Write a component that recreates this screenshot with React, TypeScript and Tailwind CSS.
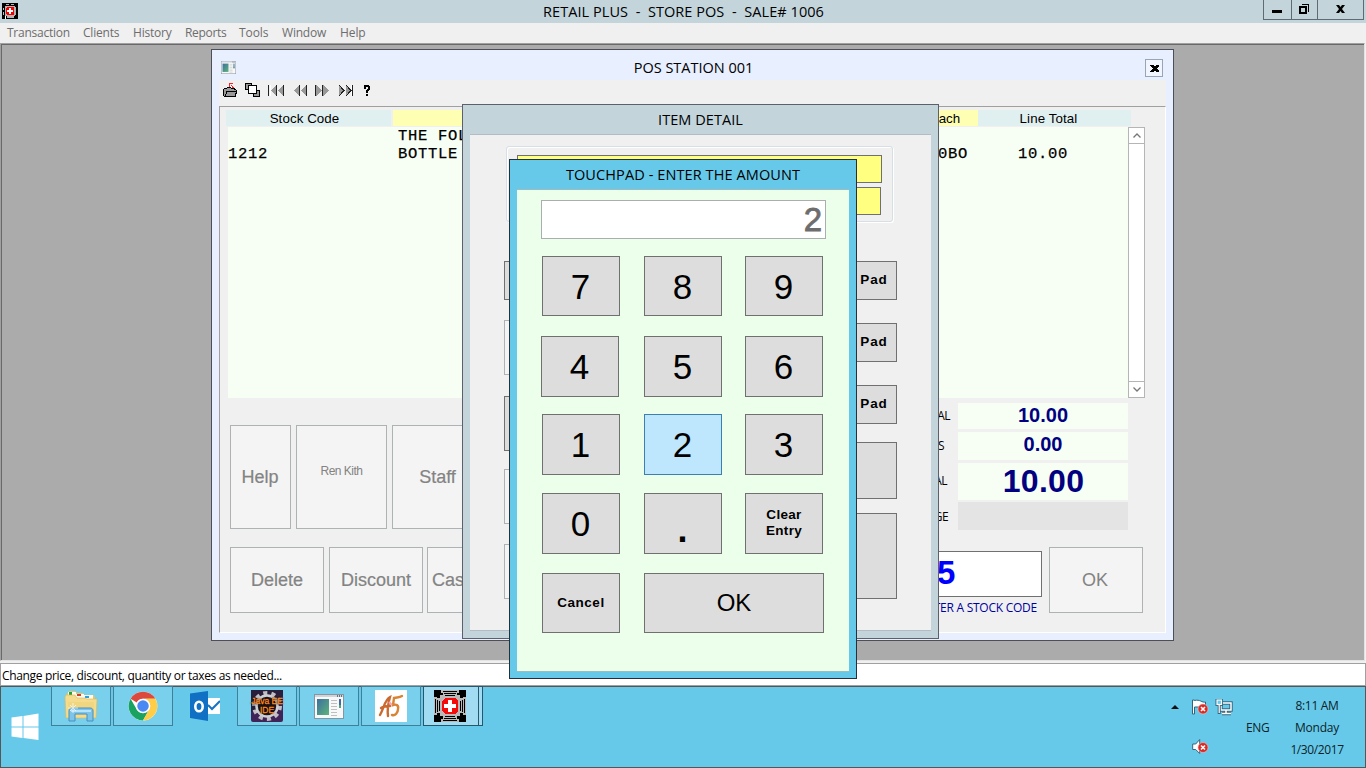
import React from "react";

const segoe = "font-['Open_Sans','Noto_Sans',sans-serif]";
const sans = "font-['Liberation_Sans',Arial,sans-serif]";
const mono = "font-['Liberation_Mono','Courier_New',monospace]";

function MedicalIcon({ size }: { size: number }) {
  return (
    <svg width={size} height={size} viewBox="0 0 32 32" shapeRendering="crispEdges" className="shrink-0">
      <rect width="32" height="32" fill="#000" />
      <path d="M7 0h18v3h-2v2h3v3h3v-1h3v18h-3v-2h-3v3h-3v3h2v3H7v-3h2v-3H6v-3H3v2H0V7h3v1h3V5h3V3H7z" fill="#b9b9b9" />
      <path d="M1.500 9v14M3.500 10v12M5.500 11v10M26.500 11v10M28.500 10v12M30.500 9v14M9 1.500h14M10 3.500h12M11 5.500h10M11 26.500h10M10 28.500h12M9 30.500h14" stroke="#000" strokeWidth="1" />
      <rect x="7" y="7" width="18" height="18" fill="#b9b9b9" />
      <path d="M11 8h10l3 3v10l-3 3H11l-3-3V11z" fill="#f50a0a" />
      <path d="M14 10h4v4h4v4h-4v4h-4v-4h-4v-4h4z" fill="#fff" />
    </svg>
  );
}

function MedicalIconSmall() {
  return (
    <svg width="16" height="16" viewBox="0 0 16 16" shapeRendering="crispEdges">
      <rect width="16" height="16" fill="#000" />
      <path d="M4 1h3v1H4zM9 1h3v1H9zM3 3h10v1h1v8h-1v1h-1v2H5v-2H3V4z" fill="#b4b4b4" />
      <path d="M1 5h1v2H1zM1 9h1v3H1z" fill="#c4c4c4" />
      <path d="M3 13h1v3H3z" fill="#fff" />
      <path d="M5 4h6l1 1v6l-1 1H5l-1-1V5z" fill="#f50000" />
      <path d="M7 5h2v2h2v2H9v2H7V9H5V7h2z" fill="#fff" />
    </svg>
  );
}

function FormIcon({ w, h }: { w: number; h: number }) {
  return (
    <svg width={w} height={h} viewBox="0 0 30 25" preserveAspectRatio="none" className="shrink-0">
      <defs>
        <linearGradient id="formPane" x1="0" y1="0" x2="1" y2="1">
          <stop offset="0" stopColor="#3d6f9e" />
          <stop offset="1" stopColor="#5cb47c" />
        </linearGradient>
      </defs>
      <rect x=".5" y=".5" width="29" height="24" fill="#f8f8f8" stroke="#8695a0" />
      <path d="M1 2h28" stroke="#d0d4da" strokeWidth="2" />
      <path d="M23 2h1M25 2h1M27 2h1" stroke="#456" strokeWidth="1.500" />
      <rect x="3" y="5" width="12" height="16" fill="url(#formPane)" />
      <path d="M17 6.500h6M17 9.500h6M17 12.500h6M17 15.500h6M17 18.500h6M17 21.500h6" stroke="#bcc0c2" />
      <rect x="25" y="5" width="2" height="9" fill="#3c6aa0" />
      <rect x="25" y="11" width="2" height="3" fill="#51a477" />
    </svg>
  );
}

function Toolbar() {
  return (
    <svg width="152" height="18" viewBox="0 0 152 18" shapeRendering="crispEdges">
      <path d="M1.500 8.500l1-1h2l1-1h3l1 1h3v1h1l1 1-1 6H2.500l-1-1z" fill="#999" stroke="#000" />
      <path d="M3 15l2-4.500h9" fill="none" stroke="#000" />
      <path d="M7.500 2v4M7 2.500h4M9.500 4v1M10.500 5v2M11.500 6v1" fill="none" stroke="#f22" />
      <g stroke="#000" fill="#999">
        <rect x="23.500" y="2.500" width="6" height="6" />
        <rect x="31.500" y="9.500" width="6" height="6" />
        <rect x="26.500" y="4.500" width="8" height="8" fill="#fff" />
      </g>
      <path d="M54 4v11l-5-5.500zM61 4v11l-5-5.500zM77 4v11l-5-5.500zM84 4v11l-5-5.500zM94 4v11l6-5.500zM101 4v11l6-5.500zM117 4v11l5-5.500zM124 4v11l5-5.500z" fill="#999" />
      <path d="M46.500 4v11M54.500 4v11M61.500 4v11M77.500 4v11M84.500 4v11M93.500 4v11M100.500 4v11M130.500 4v11" stroke="#222" />
      <path d="M48.500 4v11M129.500 4v11" stroke="#fff" />
      <path d="M117 4l5 5.500-5 5.500M124 4l5 5.500-5 5.500" fill="none" stroke="#222" />
      <path d="M142 4h5v1h1v4h-1v1h-1v2h-2V9h1V8h1V6h-2v2h-2V5h0zM144 13h2v2h-2z" fill="#000" />
    </svg>
  );
}

function Blurred({ children, className }: { children?: React.ReactNode; className: string }) {
  return (
    <div className={`shrink-0 border border-[#adb2b5] bg-[#f4f4f4] text-[#838383] flex items-center justify-center ${className}`}>
      {children}
    </div>
  );
}

function Key({ children, className }: { children?: React.ReactNode; className: string }) {
  return (
    <button className={`block shrink-0 border border-[#707070] bg-[#dddddd] text-black text-center ${className}`}>
      {children}
    </button>
  );
}

function Digit({ n, className = "" }: { n: string; className?: string }) {
  return (
    <Key className={`w-[78px] ${className}`}>
      <span className={`block pr-px pt-px text-[35px] leading-[40px] ${sans}`}>{n}</span>
    </Key>
  );
}

function TitleBar() {
  return (
    <header className="h-[23px] bg-[#c3d5db] flex items-start">
      <div className="pl-[2px] pt-[3px] w-[20px]"><MedicalIconSmall /></div>
      <div className={`flex-1 text-center pl-[4px] text-[14.500px] leading-[23px] whitespace-pre text-black ${segoe}`}>
        <span className="inline-block ml-[80px] tracking-[0.05px]">RETAIL PLUS  -  STORE POS  -  SALE# 1006</span>
      </div>
      <div className="flex w-[101px] h-[20px] mr-[2px] border border-t-0 border-[#5f6b73]">
        <div className="w-[27px] flex justify-center items-start pt-[10px] pr-[2px]"><div className="w-[10px] h-[3px] bg-black" /></div>
        <div className="w-[27px] border-x border-[#5f6b73] flex justify-center pt-[4px] pr-[2px]">
          <svg width="10" height="10" viewBox="0 0 10 10" shapeRendering="crispEdges">
            <path d="M2.500 0.500h7v7" fill="none" stroke="#000" />
            <rect x="1" y="3" width="6" height="6" fill="none" stroke="#000" strokeWidth="2" />
          </svg>
        </div>
        <div className="flex-1 flex justify-center pt-[5px]">
          <svg width="9" height="8" viewBox="0 0 9 8"><path d="M0 0h3l1.500 2L6 0h3L6 4l3 4H6L4.500 6 3 8H0l3-4z" /></svg>
        </div>
      </div>
    </header>
  );
}

function MenuBar() {
  return (
    <nav className={`h-[20px] bg-[#f0f0f0] flex pl-[7px] text-[12px] leading-[20px] text-[#6d6d6d] whitespace-nowrap ${segoe}`}>
      <span className="w-[76px] tracking-[-0.25px]">Transaction</span>
      <span className="w-[50px] tracking-[-0.2px]">Clients</span>
      <span className="w-[52px] tracking-[-0.2px]">History</span>
      <span className="w-[54px] tracking-[-0.3px]">Reports</span>
      <span className="w-[43px] tracking-[-0.1px]">Tools</span>
      <span className="w-[58px] tracking-[-0.2px]">Window</span>
      <span className="tracking-[-0.1px]">Help</span>
    </nav>
  );
}

function Chevron({ down }: { down?: boolean }) {
  return (
    <div className="h-[15px] w-[15px] flex items-center justify-center">
      <svg width="8" height="5" viewBox="0 0 8 5">
        <path d={down ? "M.5 .5L4 4l3.500-3.500" : "M.5 4.500L4 1l3.500 3.500"} fill="none" stroke="#777" strokeWidth="1.300" />
      </svg>
    </div>
  );
}

function PosWindow() {
  return (
    <section className="absolute left-[209px] top-[4px] w-[963px] h-[592px] border border-[#4c4f58] bg-[#e8efff] px-[7px] pb-[7px] flex flex-col">
      <div className="h-[30px] flex shrink-0">
        <div className="w-[40px] pt-[11px] pl-[2px]"><FormIcon w={15} h={13} /></div>
        <div className={`flex-1 text-center pr-[17px] pt-[7px] text-[14.500px] leading-[22px] text-black ${segoe}`}>
          <span className="tracking-[-0.02px]">POS STATION 001</span>
        </div>
        <div className="mt-[9px] mr-[3px] w-[18px] h-[18px] border border-[#98a5b5] bg-[#f1f5ff] flex items-center justify-center">
          <svg width="9" height="7" viewBox="0 0 9 7" shapeRendering="crispEdges"><path d="M0 0h3l1.500 1.500L6 0h3v1L6.500 3.500 9 6v1H6L4.500 5.500 3 7H0V6l2.500-2.500L0 1z" /></svg>
        </div>
      </div>
      <div className="h-[26px] bg-[#f0f0f0] shrink-0 pl-[3px] pt-px"><Toolbar /></div>
      <div className="flex-1 bg-[#f0f0f0] border-t border-l border-[#a0a0a0] border-r border-b border-r-white border-b-white">
        <div className={`ml-[6px] mt-[3px] h-[16px] flex text-[13.330px] leading-[17px] text-black ${sans}`}>
          <div className="w-[165px] bg-[#e0f0f0] text-center pr-[8px] tracking-[0.08px]">Stock Code</div>
          <div className="ml-[2px] w-[585px] bg-[#ffffb3] text-right pr-[18px] tracking-[-0.1px]">Each</div>
          <div className="w-[153px] bg-[#e0f0f0] text-center pr-[12px] tracking-[0.1px]">Line Total</div>
        </div>
        <div className="ml-[8px] mt-px h-[271px] flex">
          <div className={`w-[900px] bg-[#f7fff5] text-[15.500px] tracking-[0.7px] leading-[18px] text-black whitespace-pre [-webkit-text-stroke:0.25px_#000] ${mono}`}>
            <div className="pl-[170px]">THE FOLLOWING</div>
            <div className="flex">
              <span className="w-[170px]">1212</span>
              <span className="w-[540px]">BOTTLE</span>
              <span className="w-[80px]">0BO</span>
              <span>10.00</span>
            </div>
          </div>
          <div className="w-[17px] border border-[#b5b5b5] bg-white flex flex-col justify-between">
            <div className="border-b border-[#b5b5b5]"><Chevron /></div>
            <div className="border-t border-[#b5b5b5]"><Chevron down /></div>
          </div>
        </div>
        <div className="flex ml-[10px]">
          <div className={`w-[670px] [-webkit-text-stroke:0.2px_#838383] ${sans}`}>
            <div className="flex gap-[5px] mt-[27px] text-[18px]">
              <Blurred className="w-[61px] h-[104px] pr-px">Help</Blurred>
              <Blurred className="w-[91px] h-[104px] text-[12px] pb-[13px] tracking-[-0.5px] [-webkit-text-stroke:0]">Ren Kith</Blurred>
              <Blurred className="w-[91px] h-[104px]">Staff</Blurred>
            </div>
            <div className="flex gap-[5px] mt-[18px] text-[18px]">
              <Blurred className="w-[94px] h-[66px]">Delete</Blurred>
              <Blurred className="w-[94px] h-[66px]">Discount</Blurred>
              <Blurred className="w-[94px] h-[66px] -ml-px !justify-start pl-[4px]">Cash</Blurred>
            </div>
          </div>
          <div className="flex flex-col">
            <div className="flex mt-[5px]">
              <div className={`w-[58px] text-[12px] text-black text-right ${segoe}`}>
                <div className="h-[26px] leading-[26px] pr-[8px] tracking-[-0.6px]">TOTAL</div>
                <div className="mt-[3px] h-[28px] leading-[28px] pr-[14px] tracking-[-0.6px]">TAXES</div>
                <div className="mt-[3px] h-[37px] leading-[35px] pr-[11px] tracking-[-0.6px]">TOTAL</div>
                <div className="mt-[2px] h-[28px] leading-[29px] pr-[10px] tracking-[-0.6px]">CHANGE</div>
              </div>
              <div className={`w-[170px] text-center font-bold text-[#000080] ${sans}`}>
                <div className="h-[26px] bg-[#f7fff5] text-[20px] leading-[24px]">10.00</div>
                <div className="mt-[3px] h-[28px] bg-[#f7fff5] text-[20px] leading-[25px]">0.00</div>
                <div className="mt-[3px] h-[37px] bg-[#f7fff5] text-[32px] leading-[37px] pl-px tracking-[0.3px]">10.00</div>
                <div className="mt-[2px] h-[28px] bg-[#e4e4e4]" />
              </div>
            </div>
            <div className="flex mt-[17px]">
              <div className="w-[142px]">
                <div className={`mt-[4px] h-[46px] border border-[#707070] bg-white text-[#0000ff] font-bold text-[33px] leading-[41px] pl-[36px] ${sans}`}>5</div>
                <div className={`mt-[2px] text-[12px] leading-[17px] flex justify-end pr-[5px] text-[#0000a0] whitespace-nowrap tracking-[-0.25px] ${segoe}`}>ENTER A STOCK CODE</div>
              </div>
              <Blurred className={`ml-[7px] w-[94px] h-[66px] text-[18px] pr-[2px] ${sans}`}>OK</Blurred>
            </div>
          </div>
        </div>
      </div>
    </section>
  );
}

function ItemDetail() {
  return (
    <section className="absolute left-[460px] top-[59px] w-[477px] h-[535px] border border-[#5c6068] bg-[#c3d5db] px-[7px] pb-[7px] flex flex-col">
      <h2 className={`h-[29px] shrink-0 text-center text-[14.500px] leading-[29px] text-black ${segoe}`}>
        <span className="tracking-[0.05px]">ITEM DETAIL</span>
      </h2>
      <div className="flex-1 bg-[#f0f0f0] border-y border-[#b1bcc4]">
        <div className="ml-[36px] mt-[11px] w-[387px] h-[76px] rounded-[3px] border border-[#d5dfe5] pl-[10px] pt-[8px] shadow-[inset_1px_1px_0_#fff,1px_1px_0_#fff]">
          <div className="w-[365px] h-[28px] bg-[#ffff80] border border-[#707070]" />
          <div className="mt-[4px] w-[364px] h-[28px] bg-[#ffff80] border border-[#707070]" />
        </div>
        <div className="ml-[34px] mt-[39px] w-[393px] flex justify-between">
          <div>
            <Key className="w-[90px] h-[39px]" />
            <Blurred className="mt-[20px] w-[90px] h-[55px]" />
            <Key className="mt-[21px] w-[90px] h-[55px]" />
            <Blurred className="mt-[18px] w-[90px] h-[55px]" />
            <Blurred className="mt-[20px] w-[90px] h-[55px]" />
          </div>
          <div className={`font-bold text-[13.500px] tracking-[0.9px] ${sans}`}>
            <Key className="w-[46px] h-[39px]">Pad</Key>
            <Key className="mt-[23px] w-[46px] h-[39px]">Pad</Key>
            <Key className="mt-[23px] w-[46px] h-[39px]">Pad</Key>
            <Key className="mt-[18px] w-[46px] h-[57px]" />
            <Key className="mt-[14px] w-[46px] h-[86px]" />
          </div>
        </div>
      </div>
    </section>
  );
}

function Touchpad() {
  return (
    <section className="absolute left-[509px] top-[159px] w-[348px] h-[520px] border border-[#25303a] bg-[#67c9ea] px-[7px] pb-[6px] flex flex-col">
      <h2 className={`h-[29px] shrink-0 text-center text-[14.500px] leading-[29px] text-black whitespace-nowrap ${segoe}`}>
        <span className="tracking-[0.1px]">TOUCHPAD - ENTER THE AMOUNT</span>
      </h2>
      <div className="flex-1 bg-[#ebffeb] border-y border-[#9dbcc0] pl-[24px] pt-[10px]">
        <div className={`w-[285px] h-[39px] bg-white border border-[#abadb3] text-right text-[#6d6d6d] text-[33px] leading-[38px] pr-[3px] [-webkit-text-stroke:0.8px_#6d6d6d] ${sans}`}>2</div>
        <div className="mt-[17px] ml-px flex">
          <Digit n="7" className="h-[60px]" />
          <Digit n="8" className="ml-[24px] h-[60px]" />
          <Digit n="9" className="ml-[23px] h-[60px]" />
        </div>
        <div className="mt-[20px] flex">
          <Digit n="4" className="h-[61px]" />
          <Digit n="5" className="ml-[25px] h-[61px]" />
          <Digit n="6" className="ml-[23px] h-[61px]" />
        </div>
        <div className="mt-[17px] ml-px flex">
          <Digit n="1" className="h-[61px]" />
          <Digit n="2" className="ml-[24px] h-[61px] !bg-[#bee6fd] !border-[#3c7fb1]" />
          <Digit n="3" className="ml-[23px] h-[61px]" />
        </div>
        <div className="mt-[18px] ml-px flex">
          <Digit n="0" className="h-[61px]" />
          <Key className={`ml-[24px] w-[78px] h-[61px] font-bold text-[36px] pt-[9px] pr-px ${sans}`}>.</Key>
          <Key className={`ml-[23px] w-[78px] h-[61px] font-bold text-[13.500px] tracking-[0.3px] leading-[16px] pb-px ${sans}`}>
            Clear<br />Entry
          </Key>
        </div>
        <div className="mt-[19px] ml-px flex">
          <Key className={`w-[78px] h-[60px] font-bold text-[13.500px] tracking-[0.5px] ${sans}`}>Cancel</Key>
          <Key className={`ml-[24px] w-[180px] h-[60px] text-[24px] ${sans}`}>OK</Key>
        </div>
      </div>
    </section>
  );
}

function FolderIcon() {
  return (
    <svg width="34" height="32" viewBox="0 0 34 32">
      <path d="M2 5l3-4h6l2 2h6l1 2h10l1 3v20H2z" fill="#e5c66b" />
      <path d="M4 2h8v4H4zM12 4h8v4h-8zM20 5h9v4h-9z" fill="#fffbea" />
      <path d="M5 2h3v3H5z" fill="#20a43a" /><path d="M13 4h4v2h-4z" fill="#d43c28" /><path d="M21 6h4v2h-4z" fill="#2b9ee8" />
      <path d="M1 7l1-2h9l2 3h8l2 1h10l-1 19H2z" fill="#f4dc8c" stroke="#d9b75c" strokeWidth=".6" />
      <path d="M4 12h26v13H4z" fill="#efd27a" opacity=".6" />
      <path d="M5 31V21c0-2 1-3 3-3h18c2 0 3 1 3 3v10h-6v-7H11v7z" fill="#7cc4ea" stroke="#4590c0" />
      <path d="M7 20h20v2H7z" fill="#b8e2f6" />
      <path d="M9 13v10M4 18h10M6 15l6 6M12 15l-6 6" stroke="#fff" strokeWidth="1" opacity=".7" />
    </svg>
  );
}

function ChromeIcon() {
  return (
    <svg width="30" height="30" viewBox="0 0 48 48">
      <circle cx="24" cy="24" r="23" fill="#fff" />
      <path d="M4.100 12.500A23 23 0 0 1 43.900 12.500H24a11.500 11.500 0 0 0-10 5.800z" fill="#dc4a3d" />
      <path d="M4.100 12.500A23 23 0 0 0 24 47l9.960-17.250a11.500 11.500 0 0 1-19.920 0z" fill="#1aa260" />
      <path d="M43.900 12.500A23 23 0 0 1 24 47l9.960-17.250A11.500 11.500 0 0 0 24 12.500z" fill="#ffcd46" />
      <circle cx="24" cy="24" r="11.500" fill="#fff" />
      <circle cx="24" cy="24" r="9.200" fill="#4a89f4" />
    </svg>
  );
}

function OutlookIcon() {
  return (
    <svg width="30" height="30" viewBox="0 0 30 30">
      <path d="M17 7h13v16H17z" fill="#fff" />
      <path d="M18 14l4 4 8-8" fill="none" stroke="#1673c5" strokeWidth="2" />
      <path d="M0 2.500L18 0v30L0 27z" fill="#0f70c4" />
      <ellipse cx="9" cy="15.500" rx="3.700" ry="4.800" fill="none" stroke="#fff" strokeWidth="2.600" />
    </svg>
  );
}

function JavaIcon() {
  return (
    <div className="relative w-[32px] h-[32px]">
      <svg width="32" height="32" viewBox="0 0 32 32">
        <rect width="32" height="32" rx="2" fill="#402457" />
        <path d="M0 0h32v6L0 22z" fill="#2b203b" />
        <circle cx="16" cy="16" r="13" fill="none" stroke="#bfbfc4" strokeWidth="4" strokeDasharray="4.080 4.080" />
        <circle cx="16" cy="16" r="10.500" fill="#1c1820" stroke="#d0d0d4" strokeWidth="2.500" />
      </svg>
      <div className={`absolute inset-x-0 top-[7px] text-center text-[8.500px] leading-[9px] text-[#ff8a1c] [-webkit-text-stroke:0.3px_#ff8a1c] [text-shadow:0_0_2px_#000,0_0_2px_#000] ${sans}`}>
        <div className="-mx-[4px] whitespace-nowrap">Java EE</div>
        <div>IDE</div>
      </div>
    </div>
  );
}

function SketchIcon() {
  return (
    <svg width="32" height="32" viewBox="0 0 32 32">
      <rect width="32" height="32" fill="#fff" />
      <g fill="none" strokeLinecap="round">
        <path d="M5 25c4-7 5-16 10-18-2 7-3 12-2 19M6 18c3-2 6-2 9-2" stroke="#cb6a30" strokeWidth="2.400" />
        <path d="M27 6c-3 2-5 1-8 2l-1 7c3-1 6 0 5 4 0 4-3 7-6 6" stroke="#d98434" strokeWidth="2.400" />
      </g>
      <path d="M14 12l3 3" stroke="#f5a5b4" strokeWidth="2" />
    </svg>
  );
}

function Task({ children, className = "border-[#3f7f97] bg-[#79d0ed]" }: { children: React.ReactNode; className?: string }) {
  return <div className={`w-[60px] h-[40px] border flex items-center justify-center ${className}`}>{children}</div>;
}

function ErrorBadge({ x, y }: { x: number; y: number }) {
  return (
    <g>
      <circle cx={x} cy={y} r="5" fill="#d92b26" stroke="#f3c0bc" strokeWidth=".6" />
      <path d={`M${x - 2} ${y - 2}l4 4M${x + 2} ${y - 2}l-4 4`} stroke="#fff" strokeWidth="1.600" />
    </g>
  );
}

function Taskbar() {
  return (
    <footer className="h-[82px] bg-[#67c9ea] border border-[#565656] flex justify-between">
      <div className="flex">
        <div className="w-[50px] pl-[10px] pt-[26px]">
          <svg width="28" height="28" viewBox="0 0 28 28">
            <path d="M.5 4.500L11.500 3v10.500H.5zM12.500 3L27.500 .5v13h-15zM.5 14.500h11V25L.5 23.500zM12.500 14.500h15V27l-15-2z" fill="#fff" />
          </svg>
        </div>
        <div className="flex gap-[2px] -mt-px">
          <Task><FolderIcon /></Task>
          <Task><ChromeIcon /></Task>
          <Task className="border-transparent"><OutlookIcon /></Task>
          <Task><JavaIcon /></Task>
          <Task><FormIcon w={30} h={25} /></Task>
          <Task><SketchIcon /></Task>
          <div className="w-[60px] h-[40px] border border-[#24586a] bg-[#a1dcf3] flex">
            <div className="w-[54px] pr-[2px] flex items-center justify-center"><MedicalIcon size={32} /></div>
            <div className="flex-1 border-l border-[#24586a]" />
          </div>
        </div>
      </div>
      <div className={`flex text-[12px] text-[#0b1f28] whitespace-nowrap ${segoe}`}>
        <div className="w-[79px] pt-[12px]">
          <svg width="68" height="60" viewBox="0 0 68 60">
            <path d="M4 10l4-4 4 4z" fill="#111" />
            <g transform="translate(25 0)">
              <path d="M.5 1v14h2V8h11V3C10 4 8 0 2.500 1.500V1z" fill="#fff" stroke="#35647a" />
              <ErrorBadge x={11} y={10} />
            </g>
            <g fill="none" stroke="#35647a" strokeWidth="3.400">
              <rect x="54" y="4" width="10" height="7" /><path d="M59 11v3M55 14.500h9" />
            </g>
            <g fill="none" stroke="#fff" strokeWidth="1.500">
              <rect x="54" y="4" width="10" height="7" /><path d="M59 11v3M55 14.500h9" />
            </g>
            <rect x="50" y="1" width="4.500" height="4.500" fill="#67c9ea" stroke="#35647a" strokeWidth="3" />
            <path d="M52.200 6v9" stroke="#35647a" strokeWidth="3" />
            <rect x="50" y="1" width="4.500" height="4.500" fill="#67c9ea" stroke="#fff" strokeWidth="1.200" />
            <path d="M52.200 6v8" stroke="#fff" strokeWidth="1.200" />
            <g transform="translate(25 40)">
              <path d="M.7 5h3l4-4.500v14l-4-4h-3z" fill="#fff" stroke="#35647a" />
              <ErrorBadge x={11} y={8.500} />
            </g>
          </svg>
        </div>
        <div className="w-[23px] pt-[33px] leading-[16px] tracking-[-0.3px]">ENG</div>
        <div className="w-[96px] text-center pt-[8px] leading-[22px]">
          <div className="tracking-[-0.3px]">8:11 AM</div>
          <div className="tracking-[-0.2px]">Monday</div>
          <div className="tracking-[-0.4px]">1/30/2017</div>
        </div>
      </div>
    </footer>
  );
}

export default function App() {
  return (
    <div className="relative w-[1366px] h-[768px] overflow-hidden flex flex-col bg-[#f0f0f0]">
      <TitleBar />
      <MenuBar />
      <main className="relative h-[618px] mr-px border border-[#a0a0a0] border-r-[#e3e3e3] border-b-[#e3e3e3]">
        <div className="relative h-[616px] bg-[#ababab] border-t border-l border-[#696969]">
          <PosWindow />
          <ItemDetail />
        </div>
      </main>
      <div className={`mt-[2px] h-[23px] bg-white border border-[#a0a0a0] pl-px text-[12px] leading-[23px] text-black ${segoe}`}>
        <span className="tracking-[-0.34px]">Change price, discount, quantity or taxes as needed...</span>
      </div>
      <Taskbar />
      <Touchpad />
    </div>
  );
}
